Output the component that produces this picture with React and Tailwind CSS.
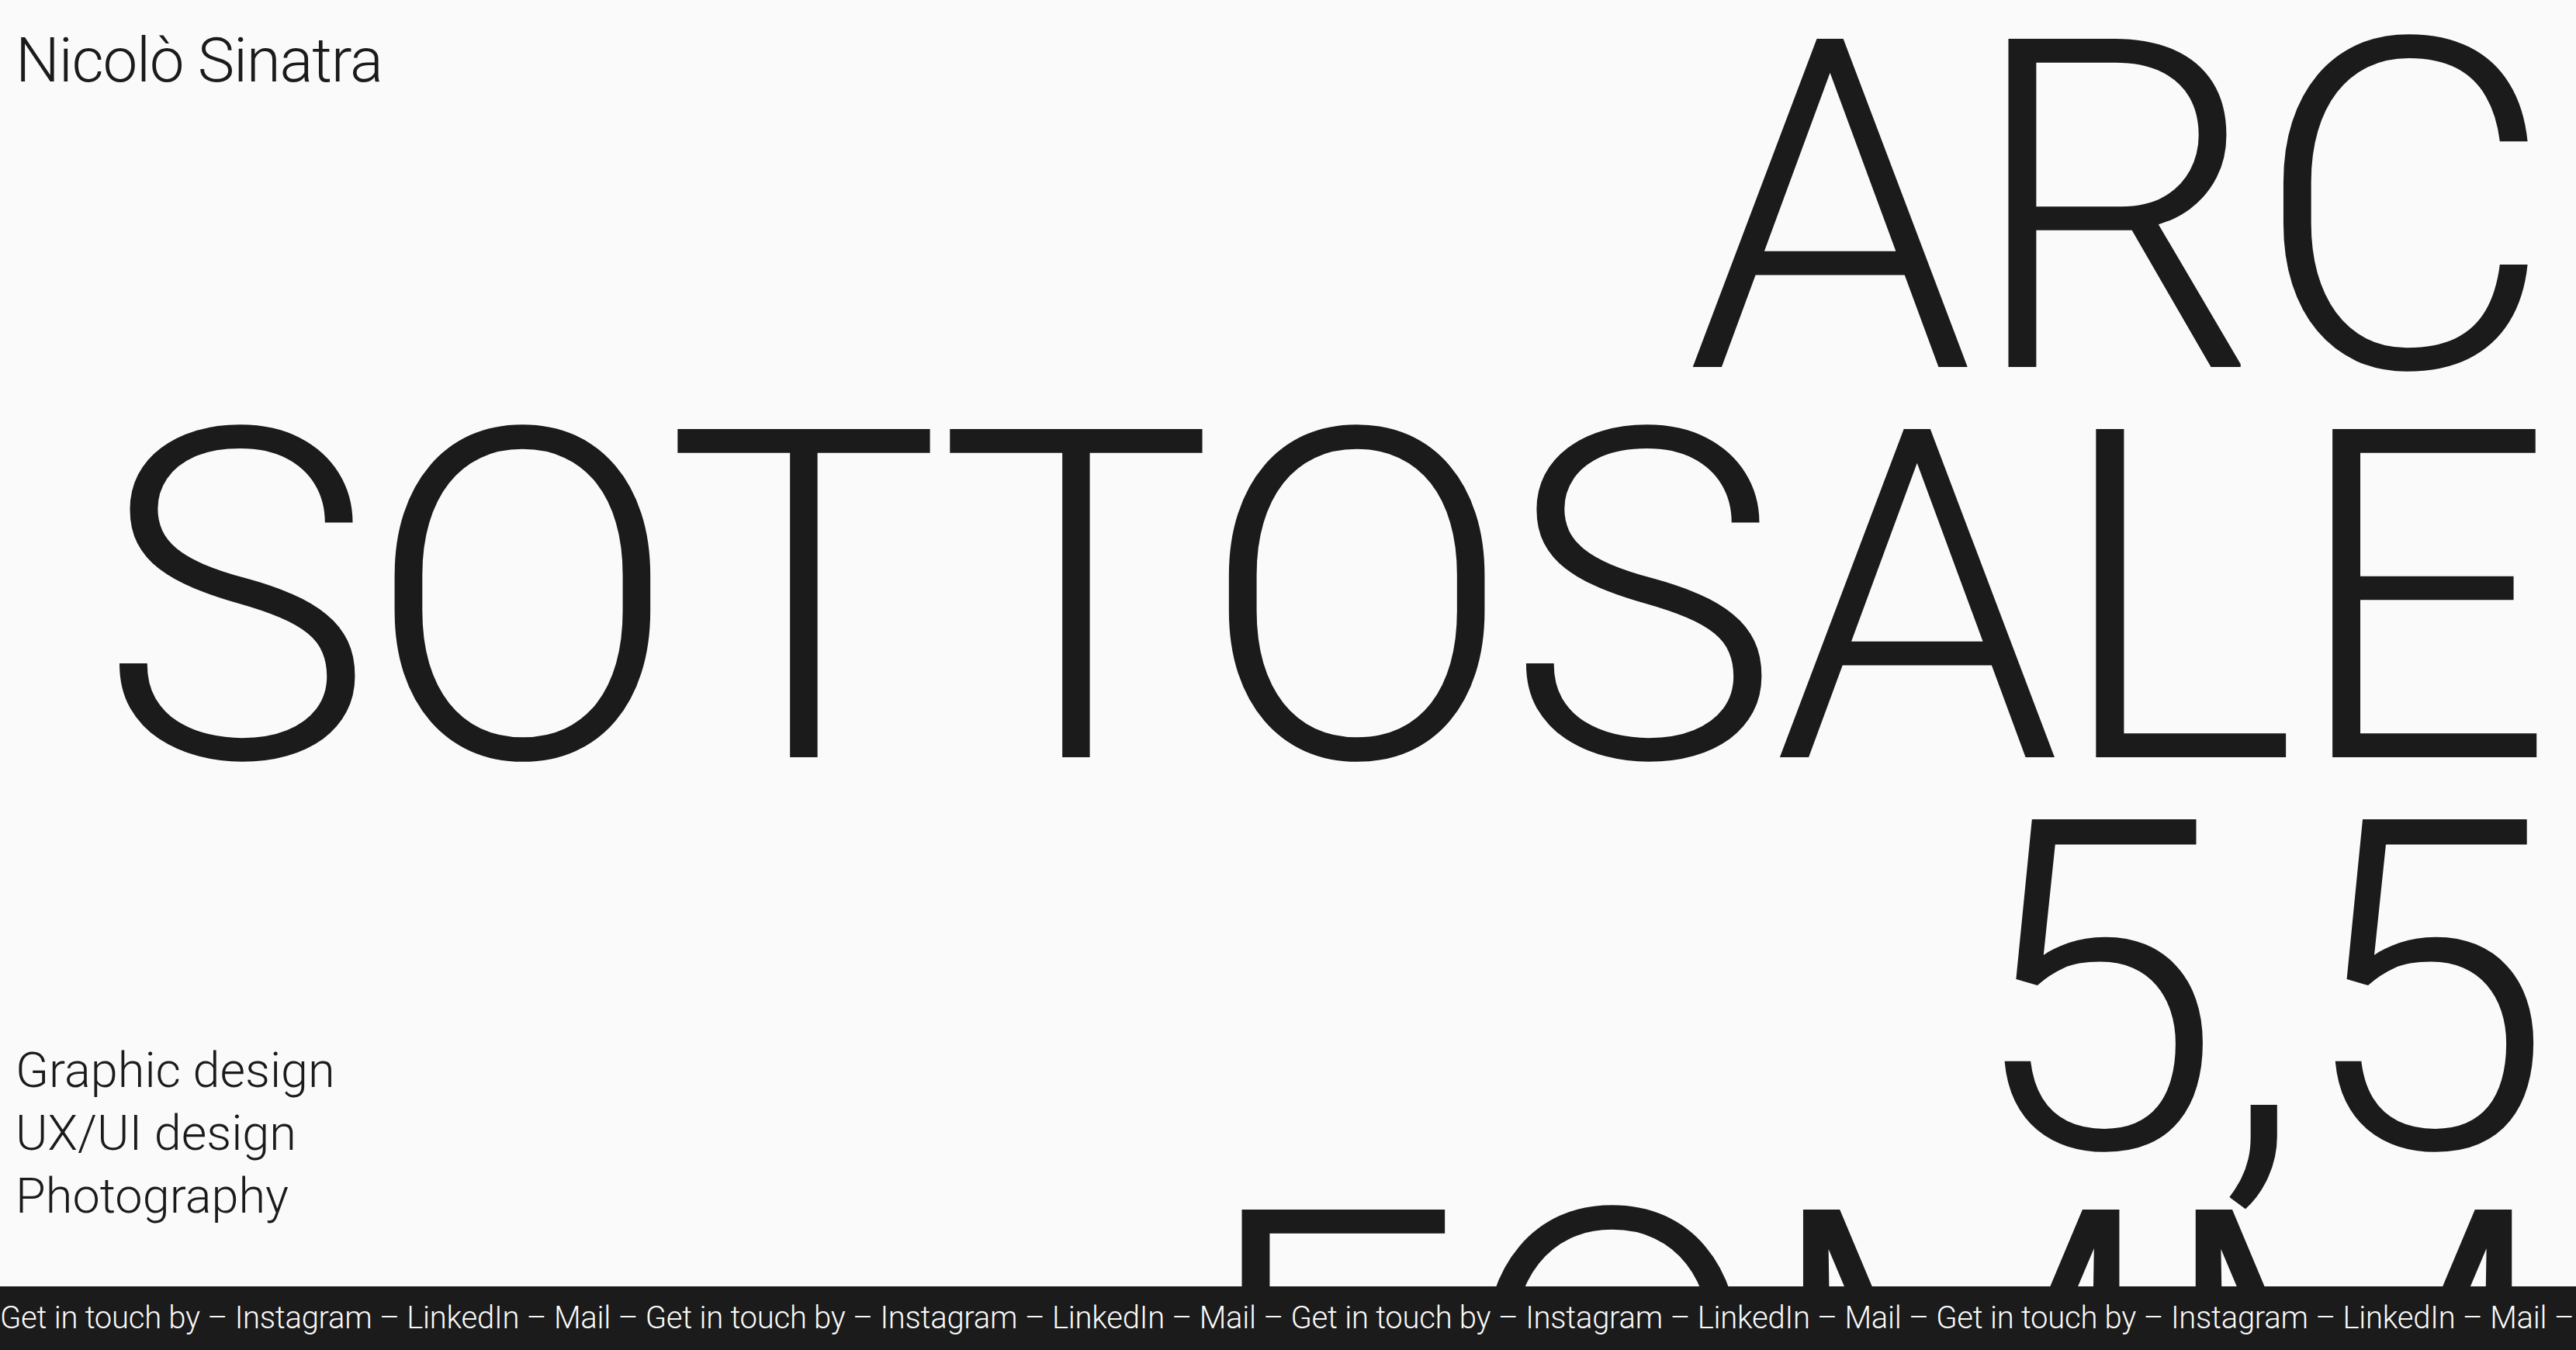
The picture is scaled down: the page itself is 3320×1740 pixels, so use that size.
import React from 'react';

const headline = ['ARC', 'SOTTOSALE', '5,5', 'EOMM'];
const services = ['Graphic design', 'UX/UI design', 'Photography'];
const ticker = ['Get in touch by', 'Instagram', 'LinkedIn', 'Mail'];

const App = () => {
  return (
    <div className="grid grid-rows-[1740px] h-[1740px] w-full overflow-hidden bg-[#fafafa] text-[#1b1b1b] font-[Roboto,sans-serif] font-light">
      {/* Left column: name + services */}
      <div className="col-start-1 row-start-1 flex flex-col justify-between pl-5 pt-[38px] pb-[158px]">
        <h1 className="text-[80px] leading-none tracking-[-1.2px] font-light">Nicolò Sinatra</h1>
        <ul className="text-[63px] leading-[81px] tracking-normal">
          {services.map((s) => (
            <li key={s}>{s}</li>
          ))}
        </ul>
      </div>

      {/* Big headline */}
      <div className="col-start-1 row-start-1 pt-[18px] pr-[38px] text-right text-[595px] leading-[503px] tracking-[-9px] whitespace-nowrap">
        {headline.map((line) => (
          <div key={line}>{line}</div>
        ))}
      </div>

      {/* Contact ticker */}
      <div className="col-start-1 row-start-1 self-end h-[82px] bg-[#1b1b1b] text-[#fafafa] overflow-hidden">
        <div className="flex whitespace-nowrap text-[40px] leading-[82px] tracking-[-0.25px]">
          {[0, 1, 2, 3, 4].map((i) => (
            <span key={i} className="whitespace-pre">
              {ticker.map((t) => (
                <span key={t}>{t} – </span>
              ))}
            </span>
          ))}
        </div>
      </div>
    </div>
  );
};

export default App;
